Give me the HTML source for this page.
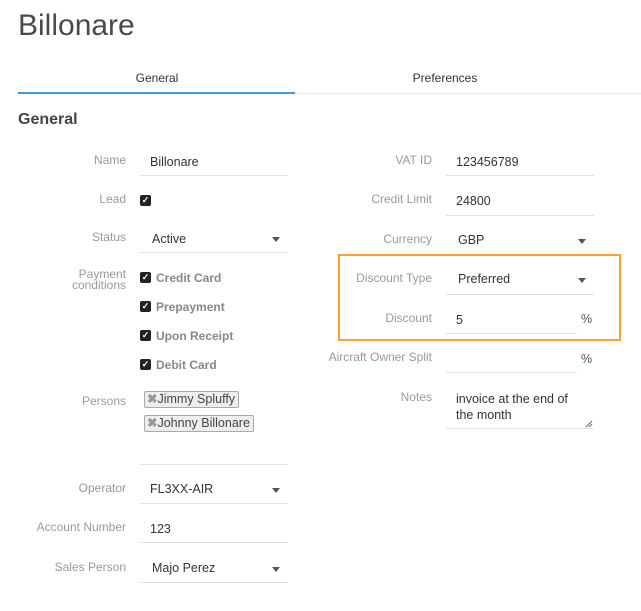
<!DOCTYPE html>
<html><head><style>
body{margin:0;width:641px;height:611px;background:#fff;font-family:"Liberation Sans",sans-serif;position:relative;overflow:hidden;color:#333}
div{position:absolute}
.t{font-size:30px;color:#4a4a4a;left:18px;top:9px}
.tab{font-size:12px;color:#333;top:71px;width:200px;text-align:center}
.lab{font-size:12px;color:#999;text-align:right;width:200px}
.val{font-size:12.5px;color:#333}
.ul{height:1px;background:#e2e2e2}
.arr{width:0;height:0;border-left:4px solid transparent;border-right:4px solid transparent;border-top:5px solid #555}
.cb{width:11px;height:11px;background:#222;border-radius:2px;color:#fff;font-size:9px;line-height:11px;text-align:center;font-weight:bold}
.pc{font-size:12px;color:#888;font-weight:bold}
.tag{border:1px solid #aaa;background:#eee;border-radius:2px;font-size:12.5px;color:#444;height:15px;line-height:15px;padding:0 3px 0 2px}
</style></head><body>
<div class="t">Billonare</div>
<div class="tab" style="left:57px">General</div>
<div class="tab" style="left:345px">Preferences</div>
<div style="left:18px;top:93px;width:623px;height:1px;background:#eee"></div>
<div style="left:18px;top:92px;width:277px;height:2px;background:#3a9be8"></div>
<div style="left:18px;top:111px;font-size:16px;font-weight:bold;color:#444">General</div>

<div class="lab" style="left:-74px;top:153px">Name</div>
<div class="val" style="left:150px;top:155px">Billonare</div>
<div class="ul" style="left:140px;top:175px;width:148px"></div>
<div class="lab" style="left:-74px;top:192px">Lead</div>
<div class="cb" style="left:140px;top:195px">✓</div>
<div class="lab" style="left:-74px;top:230px">Status</div>
<div class="val" style="left:152px;top:232px">Active</div>
<div class="arr" style="left:272px;top:237px"></div>
<div class="ul" style="left:140px;top:252px;width:148px"></div>
<div class="lab" style="left:-74px;top:269px;line-height:11px">Payment<br>conditions</div>
<div class="cb" style="left:140px;top:272px">✓</div><div class="pc" style="left:156px;top:271px">Credit Card</div>
<div class="cb" style="left:140px;top:301px">✓</div><div class="pc" style="left:156px;top:300px">Prepayment</div>
<div class="cb" style="left:140px;top:330px">✓</div><div class="pc" style="left:156px;top:329px">Upon Receipt</div>
<div class="cb" style="left:140px;top:359px">✓</div><div class="pc" style="left:156px;top:358px">Debit Card</div>
<div class="lab" style="left:-74px;top:394px">Persons</div>
<div class="tag" style="left:144px;top:391px"><b style="color:#999">✖</b>Jimmy Spluffy</div>
<div class="tag" style="left:144px;top:415px"><b style="color:#999">✖</b>Johnny Billonare</div>
<div class="ul" style="left:140px;top:464px;width:148px"></div>
<div class="lab" style="left:-74px;top:481px">Operator</div>
<div class="val" style="left:150px;top:482px">FL3XX-AIR</div>
<div class="arr" style="left:272px;top:488px"></div>
<div class="ul" style="left:140px;top:503px;width:148px"></div>
<div class="lab" style="left:-74px;top:520px">Account Number</div>
<div class="val" style="left:150px;top:522px">123</div>
<div class="ul" style="left:140px;top:542px;width:148px"></div>
<div class="lab" style="left:-74px;top:560px">Sales Person</div>
<div class="val" style="left:152px;top:561px">Majo Perez</div>
<div class="arr" style="left:272px;top:567px"></div>
<div class="ul" style="left:140px;top:582px;width:148px"></div>

<div class="lab" style="left:232px;top:153px">VAT ID</div>
<div class="val" style="left:456px;top:155px">123456789</div>
<div class="ul" style="left:446px;top:175px;width:148px"></div>
<div class="lab" style="left:232px;top:192px">Credit Limit</div>
<div class="val" style="left:456px;top:194px">24800</div>
<div class="ul" style="left:446px;top:215px;width:148px"></div>
<div class="lab" style="left:232px;top:232px">Currency</div>
<div class="val" style="left:458px;top:233px">GBP</div>
<div class="arr" style="left:578px;top:239px"></div>
<div style="left:338px;top:254px;width:279px;height:83px;border:2px solid #f7a035"></div>
<div class="lab" style="left:232px;top:271px">Discount Type</div>
<div class="val" style="left:458px;top:272px">Preferred</div>
<div class="arr" style="left:578px;top:278px"></div>
<div class="ul" style="left:446px;top:294px;width:148px"></div>
<div class="lab" style="left:232px;top:311px">Discount</div>
<div class="val" style="left:456px;top:313px">5</div>
<div class="val" style="left:581px;top:312px;color:#555">%</div>
<div class="ul" style="left:446px;top:333px;width:131px"></div>
<div class="lab" style="left:232px;top:350px">Aircraft Owner Split</div>
<div class="val" style="left:581px;top:352px;color:#555">%</div>
<div class="ul" style="left:446px;top:372px;width:131px"></div>
<div class="lab" style="left:232px;top:390px">Notes</div>
<div class="val" style="left:456px;top:391px;line-height:16px">invoice at the end of<br>the month</div>
<svg style="position:absolute;left:585px;top:420px" width="8" height="8"><path d="M1 7L7 1M4 7L7 4" stroke="#666" stroke-width="1"/></svg>
<div class="ul" style="left:446px;top:428px;width:148px"></div>
</body></html>
